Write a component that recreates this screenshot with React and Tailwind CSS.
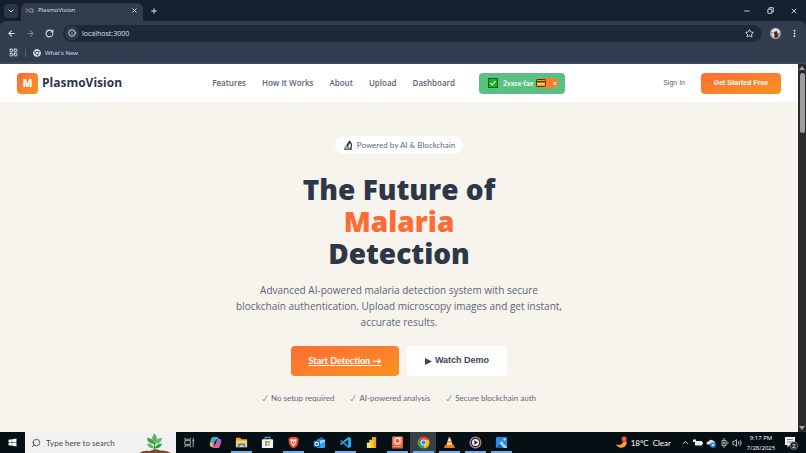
import React from "react";
import {
  ArrowLeft,
  ArrowRight,
  ChevronDown,
  ChevronUp,
  Info,
  LayoutGrid,
  Minus,
  Plus,
  RotateCw,
  Search,
  Star,
  Volume2,
  X,
} from "lucide-react";
import { FaChrome, FaWindows } from "react-icons/fa";
import { MdMoreVert } from "react-icons/md";

const navLinks = ["Features", "How It Works", "About", "Upload", "Dashboard"];
const perks = ["No setup required", "AI-powered analysis", "Secure blockchain auth"];

const BrowserChrome = () => {
  return (
    <header className="shrink-0 bg-[#15202e] text-[#dbe1ea] font-['Open_Sans','Noto_Sans',sans-serif]">
      <div className="flex h-[21px] items-center">
        <button aria-label="Search tabs" className="ml-1 flex h-3.5 w-3.5 items-center justify-center rounded bg-[#2b3747]">
          <ChevronDown size={8} strokeWidth={3} />
        </button>
        <div className="ml-[3px] mt-[3px] flex h-[18px] w-[122px] items-center rounded-t-md bg-[#313d4f] pb-1 pl-1 pr-[5px]">
          <svg viewBox="0 0 18 10" className="h-[5px] w-[9px]" fill="none" strokeWidth="2.2">
            <path d="M1 2 C5 0 7 8 11 8" stroke="#c9574f" />
            <path d="M1 8 C5 9 6 1 11 2" stroke="#4d7fd0" />
            <path d="M10 2 C18 -1 19 11 10 8" stroke="#8c93a3" />
          </svg>
          <span className="ml-1 flex-1 text-[6px] leading-none">PlasmoVision</span>
          <button aria-label="Close tab">
            <X size={7} strokeWidth={3} />
          </button>
        </div>
        <button aria-label="New tab" className="ml-[7px]">
          <Plus size={8} strokeWidth={3} />
        </button>
        <div className="ml-auto mr-2 flex items-center gap-4">
          <button aria-label="Minimize">
            <Minus size={8} strokeWidth={2.5} />
          </button>
          <button aria-label="Restore">
            <svg viewBox="0 0 8 8" className="h-[7px] w-[7px]" fill="none" stroke="currentColor">
              <path d="M1 2.5 H5.5 V7.2 H1Z M2.5 2.5 V0.8 H7.2 V5.5 H5.5" />
            </svg>
          </button>
          <button aria-label="Close">
            <X size={8} strokeWidth={2.5} />
          </button>
        </div>
      </div>

      <div className="rounded-t-md bg-[#313d4f]">
        <div className="flex h-6 items-center pl-[7px] pr-[6px]">
          <div className="flex items-center gap-2.5">
            <button aria-label="Back">
              <ArrowLeft size={9} strokeWidth={2.8} />
            </button>
            <button aria-label="Forward" className="text-[#768294]">
              <ArrowRight size={9} strokeWidth={2.8} />
            </button>
            <button aria-label="Reload">
              <RotateCw size={9} strokeWidth={2.8} />
            </button>
          </div>
          <div className="ml-[9px] flex h-[17px] flex-1 items-center rounded-full bg-[#1d2838] pl-0.5 pr-2">
            <span className="flex h-3.5 w-3.5 items-center justify-center rounded-full bg-[#313d4f]">
              <Info size={8} strokeWidth={2.5} />
            </span>
            <input
              aria-label="Address"
              defaultValue="localhost:3000"
              className="ml-[3px] min-w-0 flex-1 bg-transparent text-[7px] leading-none outline-none"
            />
            <Star size={9} strokeWidth={2.5} />
          </div>
          <svg viewBox="0 0 11 11" className="ml-2 h-[11px] w-[11px] shrink-0">
            <circle cx="5.5" cy="5.5" r="5.5" fill="#a79c93" />
            <path d="M1 4 C3 -1 8 -1 10 4 L8 5 L3 4Z" fill="#d9dde0" />
            <path d="M4 4 L7 3 L8 9 L5 10Z" fill="#352d2d" />
            <path d="M1 6 L4 5 L4 10Z" fill="#e8e2dc" />
          </svg>
          <button aria-label="Menu" className="ml-2">
            <MdMoreVert size={11} />
          </button>
        </div>
        <div className="flex h-[18px] items-center border-b border-[#3d4760] pb-0.5 pl-[9px] text-[6px]">
          <button aria-label="Apps">
            <LayoutGrid size={9} strokeWidth={2.5} />
          </button>
          <span className="mx-[7px] h-2 w-px bg-[#566275]" />
          <FaChrome size={8} />
          <a href="#new" className="ml-1 leading-none">
            What's New
          </a>
        </div>
      </div>
    </header>
  );
};

const WalletBadge = () => (
  <div className="ml-2 flex h-[21px] items-center rounded bg-[#59c184] pl-[9px] pr-[7px] font-['Lato',sans-serif] text-white">
    <svg viewBox="0 0 10 10" className="h-2.5 w-2.5">
      <rect x="0.5" y="0.5" width="9" height="9" fill="#17b51b" stroke="#146117" />
      <path d="M2.5 5.2 L4.2 7 L7.5 3" fill="none" stroke="#fff" strokeWidth="1.1" />
    </svg>
    <span className="ml-[5px] text-[7px] font-bold leading-none">2vxsx-fae</span>
    <button aria-label="Disconnect wallet" className="ml-[3px] flex h-2.5 items-center rounded-full bg-[#ff7a33]">
      <svg viewBox="0 0 10 8" className="h-2 w-2.5">
        <rect x="0.5" y="0.5" width="9" height="7" rx="0.8" fill="#f6a51d" stroke="#4c3510" />
        <rect x="1" y="2" width="8" height="1.4" fill="#4c3510" />
        <rect x="1.5" y="4" width="7" height="1.4" fill="#ffe17a" />
      </svg>
      <span className="ml-[6px] mr-px text-[8px] font-bold leading-none">×</span>
    </button>
  </div>
);

const NavBar = () => {
  return (
    <nav className="flex h-[38px] items-center justify-between bg-white px-[17px] font-['Open_Sans','Noto_Sans',sans-serif]">
      <a href="#home" className="flex items-center gap-1">
        <span className="flex h-[21px] w-[21px] items-center justify-center rounded bg-gradient-to-br from-[#ff6b35] to-[#f7931e] text-[10px] font-extrabold text-white">
          M
        </span>
        <span className="text-[12px] font-bold leading-none text-[#2d3748]">PlasmoVision</span>
      </a>
      <div className="flex items-center gap-4 text-[8px] font-semibold text-[#5a6577]">
        {navLinks.map((link) => (
          <a href="#link" key={link}>
            {link}
          </a>
        ))}
        <WalletBadge />
      </div>
      <div className="flex items-center gap-2 font-['Liberation_Sans',sans-serif] text-[7px]">
        <button className="px-2 text-[#5a6577]">Sign In</button>
        <button className="h-[21px] w-20 rounded bg-gradient-to-br from-[#ff6b35] to-[#f7931e] font-bold text-white">
          Get Started Free
        </button>
      </div>
    </nav>
  );
};

const Hero = () => {
  return (
    <main className="flex flex-1 flex-col items-center pt-[34px] text-center">
      <div className="flex h-[18px] items-center gap-1 rounded-full bg-white px-2 text-[8px] text-[#5f6979]">
        {/* microscope */}
        <svg viewBox="0 0 10 10" className="h-2.5 w-2.5" fill="none" stroke="#30343b">
          <path d="M4 6 L7 1" strokeWidth="2" />
          <path d="M7 2 C9 4 9 7 7 8.5" strokeWidth="1.2" />
          <path d="M1 9.2 H9 M1.5 7 H6" strokeWidth="1.2" />
        </svg>
        Powered by AI &amp; Blockchain
      </div>
      <h1 className="mt-[19px] font-['Open_Sans','Noto_Sans',sans-serif] text-[28px] font-extrabold leading-8 text-[#2d3748]">
        The Future of
        <br />
        <span className="text-[#ff6b35]">Malaria</span>
        <br />
        Detection
      </h1>
      <p className="mt-[13px] font-['Open_Sans','Noto_Sans',sans-serif] text-[10px] leading-4 text-[#5a6577]">
        Advanced AI-powered malaria detection system with secure
        <br />
        blockchain authentication. Upload microscopy images and get instant,
        <br />
        accurate results.
      </p>
      <div className="mt-4 flex gap-2">
        <a
          href="#upload"
          className="flex h-[30px] w-[108px] items-center justify-center rounded bg-gradient-to-br from-[#ff6b35] to-[#f7931e] text-[9px] font-bold text-white underline"
        >
          Start Detection →
        </a>
        <button className="flex h-[30px] w-[100px] items-center justify-center gap-[3px] rounded bg-white font-['Liberation_Sans',sans-serif] text-[9px] font-bold text-[#3b4658]">
          <svg viewBox="0 0 8 8" className="h-[7px] w-[7px]" fill="currentColor">
            <path d="M0 0 L8 4 L0 8Z" />
          </svg>
          Watch Demo
        </button>
      </div>
      <ul className="mt-4 flex gap-4 text-[8px] leading-3 text-[#5f6979]">
        {perks.map((perk) => (
          <li key={perk} className="flex items-center gap-[3px]">
            <svg viewBox="0 0 6 8" className="h-2 w-1.5" fill="none" stroke="#59c184">
              <path d="M0.8 5 L2 7 L5.2 1" />
            </svg>
            {perk}
          </li>
        ))}
      </ul>
    </main>
  );
};

const ScrollBar = () => (
  <div className="flex w-2 shrink-0 flex-col items-center bg-[#2b2b2d] py-0.5">
    <svg viewBox="0 0 6 4" className="h-1 w-1.5" fill="#a5a5a5">
      <path d="M3 0 L6 4 H0Z" />
    </svg>
    <div className="mt-[3px] h-[60px] w-[5px] rounded-full bg-[#9d9d9d]" />
    <svg viewBox="0 0 6 4" className="mt-auto h-1 w-1.5" fill="#a5a5a5">
      <path d="M3 4 L6 0 H0Z" />
    </svg>
  </div>
);

const apps = [
  {
    name: "Task View",
    icon: (
      <g fill="none" stroke="#c8c8c8">
        <path d="M2 5 H8 V9 H2Z M2 2 V3.5 H8 V2 M2 12 V10.5 H8 V12 M11 2 V12" strokeWidth="0.9" />
        <path d="M10.5 5 H12" strokeWidth="1.6" />
      </g>
    ),
  },
  {
    name: "Copilot",
    icon: (
      <>
        <path d="M5 1 H9 Q10 1 10.5 3 L8 3 L6 10 Q5.5 12 3.5 12 L2 11 Q0 10 1 7 L2.5 3 Q3 1 5 1Z" fill="#2b8fe0" />
        <path d="M5 1 H9 L10 3 H8 L7 6 L1 7 L2.5 3 Q3 1 5 1Z" fill="#3db4b0" />
        <path d="M1 7 H5 L4 10 L6 12 Q2 13 1 10Z" fill="#f0ba39" />
        <path d="M9 3 H11 Q14 3 13 7 L11.5 11 Q11 13 9 13 H5 Q4 13 3.5 11 H6 L8 5 Q8.3 3 9 3Z" fill="#b45be0" />
        <path d="M7 8 H12.5 L11.5 11 Q11 13 9 13 H5 Q6 12 7 8Z" fill="#ee5d7d" />
        <path d="M6.5 5 H8 L7.2 9 H5.5Z" fill="#10171a" />
      </>
    ),
  },
  {
    name: "File Explorer",
    running: true,
    icon: (
      <>
        <path d="M1 2 H5.5 L7 3.5 H13 V12 H1Z" fill="#e8a92f" />
        <path d="M1 5 H13 V12 H1Z" fill="#fbd568" />
        <path d="M3 12 V8 H11 V12 H9 V10 H5 V12Z" fill="#3d8bd6" />
      </>
    ),
  },
  {
    name: "Microsoft Store",
    icon: (
      <>
        <path d="M4.5 4 V1.5 H9.5 V4" fill="none" stroke="#3fa4e8" strokeWidth="1.2" />
        <rect x="1" y="3.5" width="12" height="9.5" rx="1" fill="#eef2f6" />
        <path d="M4.5 5.5 H6.7 V7.7 H4.5Z" fill="#e8502a" />
        <path d="M7.3 5.5 H9.5 V7.7 H7.3Z" fill="#7bb518" />
        <path d="M4.5 8.3 H6.7 V10.5 H4.5Z" fill="#2a9fe8" />
        <path d="M7.3 8.3 H9.5 V10.5 H7.3Z" fill="#f3b316" />
      </>
    ),
  },
  {
    name: "Brave",
    running: true,
    icon: (
      <>
        <path d="M4 1 H10 L11 2 L12.5 3 L11.7 9 L10 11.5 L7 13.5 L4 11.5 L2.3 9 L1.5 3 L3 2Z" fill="#f04e2c" />
        <path d="M3.5 4 L5.5 3.5 L7 4 L8.5 3.5 L10.5 4 L9.3 7.5 L9 9 L7 11 L5 9 L4.7 7.5Z" fill="#fff" />
        <path d="M5 5.5 L6.5 6 L7 8.5 L7.5 6 L9 5.5 L8 9 H6Z" fill="#f04e2c" />
      </>
    ),
  },
  {
    name: "Outlook",
    icon: (
      <>
        <path d="M4 4 L9 1 L13 4 V12 H4Z" fill="#1b6fc4" />
        <path d="M5 5 L13 4 V6 L8.5 9 L5 7Z" fill="#8fd7fb" />
        <path d="M4 12 L13 6 V11 Q13 13 11 13 H5Z" fill="#35a4ee" />
        <rect x="0.5" y="5" width="7" height="7" rx="1" fill="#1263b5" />
        <circle cx="4" cy="8.5" r="1.9" fill="none" stroke="#fff" strokeWidth="1.1" />
      </>
    ),
  },
  {
    name: "Visual Studio Code",
    running: true,
    icon: (
      <>
        <path d="M10 1 L13 2.5 V11.5 L10 13 L1 5.3 L2.2 4.2 L10 10Z" fill="#1a86d0" />
        <path d="M10 1 L13 2.5 V11.5 L10 13 V4 L2.2 9.8 L1 8.7Z" fill="#33a5ee" />
      </>
    ),
  },
  {
    name: "Power BI",
    icon: (
      <>
        <rect x="7.5" y="1" width="4.5" height="12" rx="0.7" fill="#e5a91c" />
        <rect x="4.7" y="4" width="4.5" height="9" rx="0.7" fill="#f3c72f" />
        <rect x="2" y="7" width="4.5" height="6" rx="0.7" fill="#fae06a" />
      </>
    ),
  },
  {
    name: "Ubuntu",
    running: true,
    icon: (
      <>
        <rect x="1" y="0.5" width="12" height="13" fill="#e9562b" />
        <circle cx="7" cy="5.3" r="2.8" fill="none" stroke="#fff" strokeWidth="1.1" />
        <path d="M3 1.5 H11 V9 H3Z" fill="none" stroke="#fff" strokeWidth="0.6" />
        <circle cx="9.2" cy="3" r="1" fill="#fff" />
        <path d="M3 11.3 H11" stroke="#f8c4b2" strokeWidth="1.2" strokeDasharray="1.4 0.6" />
      </>
    ),
  },
  {
    name: "Google Chrome",
    running: true,
    active: true,
    icon: (
      <>
        <path d="M7 7 L1.4 3.8 A6.4 6.4 0 0 1 12.6 3.8Z" fill="#e94335" />
        <path d="M7 7 L12.6 3.8 A6.4 6.4 0 0 1 7 13.4Z" fill="#fbbc05" />
        <path d="M7 7 L7 13.4 A6.4 6.4 0 0 1 1.4 3.8Z" fill="#34a353" />
        <path d="M7 4 H12.6 L9.6 8.5Z" fill="#fbbc05" />
        <circle cx="7" cy="7" r="3.1" fill="#fff" />
        <circle cx="7" cy="7" r="2.4" fill="#4285f4" />
      </>
    ),
  },
  {
    name: "VLC",
    running: true,
    icon: (
      <>
        <path d="M2.5 9.5 H11.5 L13 13 H1Z" fill="#e57b16" />
        <path d="M6.2 1 H7.8 L10.5 10.5 Q7 12 3.5 10.5Z" fill="#f38a1c" />
        <path d="M5.6 3.4 H8.4 L9 5.5 H5Z M4.5 7.3 H9.5 L10 9.2 H4Z" fill="#f1eee9" />
      </>
    ),
  },
  {
    name: "Media Player",
    running: true,
    icon: (
      <>
        <circle cx="7" cy="7" r="5.8" fill="#2b2638" stroke="#cf8f6d" strokeWidth="1.2" />
        <path d="M7 1.2 A5.8 5.8 0 0 0 7 12.8" fill="none" stroke="#8674b8" strokeWidth="1.2" />
        <circle cx="7" cy="7" r="3.8" fill="#f1f1f3" />
        <path d="M5.7 4.6 L9.6 7 L5.7 9.4Z" fill="#26222f" />
      </>
    ),
  },
  {
    name: "Photos",
    running: true,
    icon: (
      <>
        <rect x="1" y="1" width="12" height="12" rx="1" fill="#2489e0" />
        <path d="M1 12 L7 5.5 L13 12 V13 H1Z" fill="#9bd5fa" />
        <path d="M1 12 L5 8 L9.5 13 H1Z" fill="#1a5fb4" />
        <circle cx="10.3" cy="3.8" r="1.2" fill="#e5f5ff" />
      </>
    ),
  },
];

const Plant = () => (
  <svg viewBox="0 0 34 21" className="h-[21px] w-[34px]">
    <path d="M1 21 Q6 18 12 19 Q17 16 22 18.5 Q29 18 33 21Z" fill="#7d452c" />
    <path d="M16.5 19 C17 14 16 10 16.5 6" fill="none" stroke="#3c8f3c" strokeWidth="1.3" />
    <path d="M16.5 10 C13 8 14 4 16.5 1.5 C19 4 20 8 16.5 10Z" fill="#56b35a" />
    <path d="M16 12 C12 12 9 9 9 6 C13 6 16 8 16 12Z" fill="#449e4b" />
    <path d="M17 12 C21 12 24 9 24 6 C20 6 17 8 17 12Z" fill="#66bd62" />
    <path d="M16 16 C13 17 10 15 9 12 C12 11 15 13 16 16Z" fill="#5cb55c" />
    <path d="M17 16 C20 17 23 15 24 12 C21 11 18 13 17 16Z" fill="#3b9445" />
  </svg>
);

const TaskBar = () => {
  return (
    <footer className="flex h-[21px] shrink-0 items-center bg-[#061014] font-['Lato','Open_Sans',sans-serif] text-white">
      <button aria-label="Start" className="flex w-[25px] justify-center">
        <FaWindows size={9} />
      </button>
      <label className="flex h-[21px] w-[151px] items-center bg-[#f1f1f1] pl-1.5 pr-1 text-[#3c3c3c]">
        <Search size={10} strokeWidth={2} className="-scale-x-100" />
        <input
          aria-label="Search"
          placeholder="Type here to search"
          className="ml-[5px] min-w-0 flex-1 bg-transparent text-[8px] outline-none placeholder:text-[#4a4a4a]"
        />
        <Plant />
      </label>
      <div className="flex">
        {apps.map((app) => (
          <button
            key={app.name}
            aria-label={app.name}
            className={`flex h-[21px] w-[26px] flex-col items-center justify-between ${app.active ? "bg-[#354045]" : ""}`}
          >
            <svg viewBox="0 0 14 14" className="mt-1 h-[13px] w-[13px]">
              {app.icon}
            </svg>
            <span className={`h-0.5 w-[21px] ${app.running ? "bg-[#6cb2ea]" : ""}`} />
          </button>
        ))}
      </div>

      <div className="ml-auto flex items-center">
        <svg viewBox="0 0 14 14" className="h-[13px] w-[13px]">
          <path d="M9 3 C10 8 6 11 1 9 C3 14 11 14 12.5 8 C12.8 5 11 3 9 3Z" fill="#f6a32b" />
          <circle cx="9.8" cy="3.4" r="3" fill="#d9352b" />
          <path d="M9.8 1.8 V4.9" stroke="#fff" strokeWidth="0.8" />
        </svg>
        <span className="ml-[3px] text-[8px] leading-none">18°C</span>
        <span className="ml-1 text-[8px] leading-none">Clear</span>
        <div className="ml-2.5 flex items-center gap-[3px]">
          <ChevronUp size={9} strokeWidth={2} />
          <svg viewBox="0 0 10 8" className="h-2 w-2.5" fill="#e9e9e9">
            <path d="M2 2 H9 V3.2 H10 V5.2 H9 V6.5 H2Z M0 0.5 H3 V3 H0Z" />
          </svg>
          <svg viewBox="0 0 10 10" className="h-2.5 w-2.5">
            <path d="M1 6.5 Q-0.5 4 2.5 3.5 Q4 0.5 7 2.5 Q9.5 3 9 6.5Z" fill="#dcdcdc" />
            <circle cx="7" cy="7" r="2.8" fill="#1f8fe0" />
            <path d="M5.6 7 H8.4 M7 5.7 V8.3" stroke="#fff" strokeWidth="0.7" />
          </svg>
          <svg viewBox="0 0 10 10" className="h-2.5 w-2.5" fill="none" stroke="#d0d0d0" strokeWidth="0.8">
            <path d="M3 2.5 H7 V7.5 H3Z M3.8 1 H6.2 M3.8 9 H6.2 M8 3.5 L9.3 5 L8 6.5" />
            <circle cx="5" cy="5" r="1" />
          </svg>
          <Volume2 size={10} strokeWidth={1.8} />
        </div>
        <div className="ml-1 w-[30px] text-center font-['Open_Sans',sans-serif] text-[6px] leading-[10px]">
          <div className="whitespace-nowrap">9:17 PM</div>
          <div className="whitespace-nowrap">7/28/2025</div>
        </div>
        <button aria-label="Notifications" className="ml-2 mr-2">
          <svg viewBox="0 0 14 14" className="h-[14px] w-[14px]">
            <path d="M1 1 H11 V9 H6 L3.5 11.5 V9 H1Z" fill="#f3f3f3" />
            <path d="M3 3.5 H9 M3 6 H9" stroke="#555" strokeWidth="0.7" />
            <circle cx="9.8" cy="9.6" r="3.9" fill="#23282b" stroke="#b9b9b9" strokeWidth="0.5" />
            <text x="9.8" y="11.9" textAnchor="middle" fontSize="6" fill="#fff">
              2
            </text>
          </svg>
        </button>
      </div>
    </footer>
  );
};

const App = () => {
  return (
    <div className="flex h-screen flex-col overflow-hidden">
      <BrowserChrome />
      <div className="flex min-h-0 flex-1 border-t border-[#3d4760]">
        <div className="flex min-w-0 flex-1 flex-col bg-[#f7f3ed] font-['Lato','Open_Sans',sans-serif]">
          <NavBar />
          <Hero />
        </div>
        <ScrollBar />
      </div>
      <TaskBar />
    </div>
  );
};

export default App;
